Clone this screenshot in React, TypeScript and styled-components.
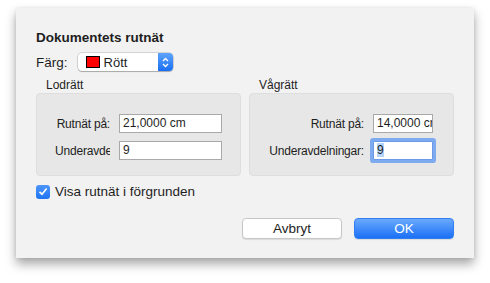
import React from 'react';
import styled, { createGlobalStyle } from 'styled-components';

const Global = createGlobalStyle`
  html, body {
    margin: 0;
    padding: 0;
    background: #ffffff;
  }
  body {
    font-family: "Liberation Sans", Arial, sans-serif;
    color: #1e1e1e;
  }
`;

// --- Dialog ---
const Page = styled.div`
  width: 490px;
  height: 283px;
  padding: 8px 16px 0 16px;
  box-sizing: border-box;
`;

const Dialog = styled.div`
  width: 458px;
  height: 250px;
  box-sizing: border-box;
  padding: 22px 20px 0 20px;
  background: #f2f2f2;
  box-shadow: 0 6px 10px rgba(0, 0, 0, 0.35), 0 0 4px rgba(0, 0, 0, 0.08);
  display: flex;
  flex-direction: column;
`;

const Title = styled.div`
  font-size: 13.5px;
  font-weight: bold;
  line-height: 16px;
`;

const ColorRow = styled.div`
  display: flex;
  align-items: center;
  gap: 10px;
  margin-top: 7px;
  font-size: 13.5px;
`;

const Popup = styled.div`
  width: 95px;
  height: 18px;
  box-sizing: border-box;
  display: flex;
  align-items: center;
  background: #fff;
  border-radius: 4px;
  box-shadow: 0 0 0 0.5px rgba(0, 0, 0, 0.25), 0 1px 1px rgba(0, 0, 0, 0.2);
  overflow: hidden;
`;

const Swatch = styled.span`
  width: 12px;
  height: 10px;
  margin: 0 4px 0 8px;
  background: #ff0000;
  border: 1px solid #000;
`;

const PopupText = styled.span`
  flex: 1;
  font-size: 13px;
`;

const Stepper = styled.span`
  width: 15px;
  height: 18px;
  display: flex;
  align-items: center;
  justify-content: center;
  background: linear-gradient(#5ea4fb, #1a6ff3);
`;

// --- Groups ---
const Groups = styled.div`
  display: grid;
  grid-template-columns: 205px 205px;
  gap: 8px;
  margin-top: 7px;
`;

const Group = styled.div`
  display: flex;
  flex-direction: column;
`;

const GroupLabel = styled.div`
  font-size: 12px;
  line-height: 15px;
  padding-left: 10px;
`;

const GroupBox = styled.div`
  height: 83px;
  box-sizing: border-box;
  padding-top: 20px;
  background: #e7e7e7;
  border: 1px solid #dedede;
  border-radius: 4px;
  display: flex;
  flex-direction: column;
  gap: 8px;
`;

const FieldRow = styled.div<{ $labelWidth: number; $indent: number }>`
  display: grid;
  grid-template-columns: ${p => p.$labelWidth}px auto;
  column-gap: 9px;
  align-items: center;
  padding-left: ${p => p.$indent}px;
  font-size: 12px;
`;

const FieldLabel = styled.span`
  text-align: right;
  white-space: nowrap;
  overflow: hidden;
  letter-spacing: -0.2px;
`;

const Input = styled.div<{ $width: number; $focused?: boolean }>`
  width: ${p => p.$width}px;
  height: 19px;
  box-sizing: border-box;
  padding: 0 3px;
  background: #fff;
  border: 1px solid #a9a9a9;
  line-height: 17px;
  font-size: 12px;
  white-space: nowrap;
  overflow: hidden;
  box-shadow: ${p => (p.$focused ? '0 0 0 3px #7eaaf0' : 'none')};
  border-color: ${p => (p.$focused ? '#6b9ae8' : '#a9a9a9')};
  border-radius: ${p => (p.$focused ? '1px' : '0')};
`;

const Selected = styled.span`
  background: #b3d4fd;
`;

// --- Checkbox ---
const CheckRow = styled.label`
  display: flex;
  align-items: center;
  gap: 5px;
  margin-top: 8px;
  font-size: 13.5px;
`;

const CheckBox = styled.span`
  width: 14px;
  height: 14px;
  border-radius: 3px;
  background: linear-gradient(#4d95fa, #1f74f4);
  display: flex;
  align-items: center;
  justify-content: center;
`;

// --- Buttons ---
const Buttons = styled.div`
  display: flex;
  justify-content: flex-end;
  gap: 12px;
  margin-top: 19px;
`;

const Button = styled.button<{ $primary?: boolean }>`
  width: 100px;
  height: 21px;
  padding: 0;
  border-radius: 4px;
  font-family: "Liberation Sans", Arial, sans-serif;
  font-size: 13.5px;
  color: ${p => (p.$primary ? '#fff' : '#1e1e1e')};
  background: ${p => (p.$primary ? 'linear-gradient(#6aaafd, #1b70f5)' : '#fff')};
  border: ${p => (p.$primary ? '1px solid #2f7ef2' : '1px solid #c6c6c6')};
  box-shadow: 0 1px 1px rgba(0, 0, 0, 0.1);
`;

const App: React.FC = () => (
  <Page>
    <Global />
    <Dialog>
      <Title>Dokumentets rutnät</Title>
      <ColorRow>
        <span>Färg:</span>
        <Popup>
          <Swatch />
          <PopupText>Rött</PopupText>
          <Stepper>
            <svg width="7" height="11" viewBox="0 0 7 11">
              <path d="M1 4 L3.5 1.5 L6 4 M1 7 L3.5 9.5 L6 7" fill="none" stroke="#fff" strokeWidth="1.3" />
            </svg>
          </Stepper>
        </Popup>
      </ColorRow>

      <Groups>
        <Group>
          <GroupLabel>Lodrätt</GroupLabel>
          <GroupBox>
            <FieldRow $labelWidth={55} $indent={18}>
              <FieldLabel>Rutnät på:</FieldLabel>
              <Input $width={103}>21,0000 cm</Input>
            </FieldRow>
            <FieldRow $labelWidth={55} $indent={18}>
              <FieldLabel>Underavdelningar:</FieldLabel>
              <Input $width={103}>9</Input>
            </FieldRow>
          </GroupBox>
        </Group>
        <Group>
          <GroupLabel>Vågrätt</GroupLabel>
          <GroupBox>
            <FieldRow $labelWidth={104} $indent={10}>
              <FieldLabel>Rutnät på:</FieldLabel>
              <Input $width={60}>14,0000 cm</Input>
            </FieldRow>
            <FieldRow $labelWidth={104} $indent={10}>
              <FieldLabel>Underavdelningar:</FieldLabel>
              <Input $width={60} $focused>
                <Selected>9</Selected>
              </Input>
            </FieldRow>
          </GroupBox>
        </Group>
      </Groups>

      <CheckRow>
        <CheckBox>
          <svg width="10" height="9" viewBox="0 0 10 9">
            <path d="M1.5 4.8 L4 7.2 L8.6 1.5" fill="none" stroke="#fff" strokeWidth="1.6" />
          </svg>
        </CheckBox>
        <span>Visa rutnät i förgrunden</span>
      </CheckRow>

      <Buttons>
        <Button>Avbryt</Button>
        <Button $primary>OK</Button>
      </Buttons>
    </Dialog>
  </Page>
);

export default App;
